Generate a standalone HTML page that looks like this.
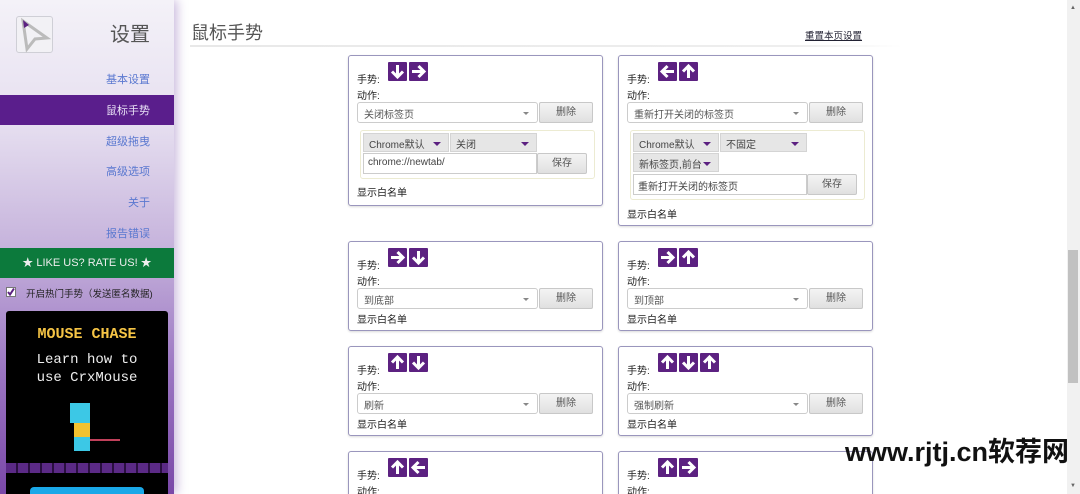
<!DOCTYPE html>
<html><head><meta charset="utf-8"><style>
*{box-sizing:border-box;margin:0;padding:0}
html{width:1080px;height:494px;overflow:hidden}
body{width:1080px;height:494px;overflow:hidden;background:#fff;font-family:"Liberation Sans","Noto Sans CJK SC",sans-serif;font-size:11px;color:#222;position:relative}
.abs{position:absolute}
#side{left:0;top:0;width:174px;height:494px;background:linear-gradient(#f4f2f8 0%,#e6dff0 25%,#c6b3dc 50%,#9b76c2 75%,#7a48a8 100%);box-shadow:3px 0 10px rgba(120,80,170,.4)}
.nav{position:absolute;right:24px;font-size:11px;color:#5a78d0}
.card{position:absolute;border:1px solid #9a96bd;border-radius:3px;background:#fff;box-shadow:0 1px 2px rgba(0,0,0,.15)}
.g{position:absolute;left:8px;font-size:10px}
.ico{position:absolute;top:6px;left:39px;display:flex;gap:2px}
.ico span{width:19px;height:19px;background:#5c2181;display:block;border-radius:1px}
.ico svg{display:block}
.sel{position:absolute;left:8px;width:181px;height:21px;border:1px solid #ccc;border-radius:3px;background:#fff;font-size:10px;color:#555;padding:3px 6px}
.sel:after{content:"";position:absolute;right:8px;top:9px;border:3px solid transparent;border-top:3px solid #888}
.btn{position:absolute;left:190px;width:54px;height:21px;border:1px solid #c8c8c8;border-radius:2px;background:linear-gradient(#f4f4f4,#e0e0e0);font-size:10px;color:#555;text-align:center;line-height:19px}
.dd{position:absolute;height:19px;background:#e6e6e6;border:1px solid #d4d4d4;font-size:10px;color:#444;padding:2px 5px}
.dd:after{content:"";position:absolute;right:7px;top:8px;border:4px solid transparent;border-top:4px solid #5c2181}
.inp{position:absolute;height:21px;border:1px solid #ccc;background:#fff;font-size:10px;color:#444;padding:3px 4px}
</style></head><body>
<div id="side" class="abs">
 <div class="abs" style="left:16px;top:16px;width:37px;height:37px;border:1px solid #cfcfd6;border-radius:3px;background:#f2f1f5">
  <svg width="37" height="37" viewBox="0 0 37 37"><path d="M6 4 L30 21 L18 22 L10 32 Z" fill="none" stroke="#bbb" stroke-width="3"/><path d="M6 3 L12 8 L7 11 Z" fill="#5c2181"/></svg>
 </div>
 <div class="abs" style="right:24px;top:18px;font-size:20px;color:#555">设置</div>
 <div class="nav" style="top:71px">基本设置</div>
 <div class="abs" style="left:0;top:95px;width:174px;height:30px;background:#5a1e8c"></div>
 <div class="nav" style="top:102px;color:#e8e0f5">鼠标手势</div>
 <div class="nav" style="top:133px">超级拖曳</div>
 <div class="nav" style="top:163px">高级选项</div>
 <div class="nav" style="top:194px">关于</div>
 <div class="nav" style="top:225px">报告错误</div>
 <div class="abs" style="left:0;top:248px;width:174px;height:30px;background:#0c7a3c;color:#eee;font-size:11px;text-align:center;line-height:30px">★ LIKE US? RATE US! ★</div>
 <svg class="abs" style="left:6px;top:287px" width="10" height="10"><rect x=".5" y=".5" width="9" height="9" fill="#fff" stroke="#777"/><path d="M2 5l2 2.5 4-6" stroke="#5c2181" stroke-width="2" fill="none"/></svg>
 <div class="abs" style="left:26px;top:286px;font-size:9.5px;color:#222">开启热门手势（发送匿名数据)</div>
 <div class="abs" style="left:6px;top:311px;width:162px;height:190px;background:#000;border-radius:3px">
  <div class="abs" style="left:0;width:162px;top:15px;text-align:center;color:#f5c445;font-weight:bold;font-size:15px;font-family:'Liberation Mono',monospace">MOUSE CHASE</div>
  <div class="abs" style="left:0;width:162px;top:40px;text-align:center;color:#eee;font-size:14px;font-family:'Liberation Mono',monospace;line-height:18px">Learn how to<br>use CrxMouse</div>
  <div class="abs" style="left:64px;top:92px;width:20px;height:20px;background:#3cc8e6"></div>
  <div class="abs" style="left:68px;top:112px;width:16px;height:14px;background:#f2c230"></div>
  <div class="abs" style="left:68px;top:126px;width:16px;height:14px;background:#3cc8e6"></div>
  <div class="abs" style="left:84px;top:128px;width:30px;height:2px;background:#c0405a"></div>
  <div class="abs" style="left:0;top:152px;width:162px;height:10px;background:repeating-linear-gradient(90deg,#5b2a86 0 10px,#2a0f40 10px 12px)"></div>
  <div class="abs" style="left:24px;top:176px;width:114px;height:14px;background:#1aa8e8;border-radius:4px"></div>
 </div>
</div>
<div class="abs" style="left:191px;top:19px;font-size:18px;color:#555">鼠标手势</div>
<div class="abs" style="left:805px;top:28px;font-size:9.5px;color:#223;text-decoration:underline">重置本页设置</div>
<div class="abs" style="left:190px;top:45px;width:712px;height:2px;background:linear-gradient(90deg,#e8e8e8,#eee 85%,#fff)"></div>

<div class="card" style="left:348px;top:55px;width:255px;height:151px">
 <div class="g" style="top:15px">手势:</div>
 <div class="ico"><span><svg width="19" height="19"><path d="M9.5 3v12M4 9.5l5.5 5.5 5.5-5.5" stroke="#fff" stroke-width="3" fill="none"/></svg></span><span><svg width="19" height="19"><path d="M3 9.5h12M9.5 4l5.5 5.5-5.5 5.5" stroke="#fff" stroke-width="3" fill="none"/></svg></span></div>
 <div class="g" style="top:31px">动作:</div>
 <div class="sel" style="top:46px">关闭标签页</div><div class="btn" style="top:46px">删除</div>
 <div class="abs" style="left:11px;top:74px;width:235px;height:49px;border:1px solid #ecebd2;border-radius:3px"></div>
 <div class="dd" style="left:14px;top:77px;width:86px">Chrome默认</div>
 <div class="dd" style="left:101px;top:77px;width:87px">关闭</div>
 <div class="inp" style="left:14px;top:97px;width:174px">chrome://newtab/</div>
 <div class="btn" style="left:188px;top:97px;width:50px">保存</div>
 <div class="g" style="top:128px">显示白名单</div>
</div>
<div class="card" style="left:618px;top:55px;width:255px;height:171px">
 <div class="g" style="top:15px">手势:</div>
 <div class="ico"><span><svg width="19" height="19"><path d="M16 9.5H4M9.5 4L4 9.5l5.5 5.5" stroke="#fff" stroke-width="3" fill="none"/></svg></span><span><svg width="19" height="19"><path d="M9.5 16V4M4 9.5l5.5-5.5 5.5 5.5" stroke="#fff" stroke-width="3" fill="none"/></svg></span></div>
 <div class="g" style="top:31px">动作:</div>
 <div class="sel" style="top:46px">重新打开关闭的标签页</div><div class="btn" style="top:46px">删除</div>
 <div class="abs" style="left:11px;top:74px;width:235px;height:70px;border:1px solid #ecebd2;border-radius:3px"></div>
 <div class="dd" style="left:14px;top:77px;width:86px">Chrome默认</div>
 <div class="dd" style="left:101px;top:77px;width:87px">不固定</div>
 <div class="dd" style="left:14px;top:97px;width:86px">新标签页,前台</div>
 <div class="inp" style="left:14px;top:118px;width:174px">重新打开关闭的标签页</div>
 <div class="btn" style="left:188px;top:118px;width:50px">保存</div>
 <div class="g" style="top:150px">显示白名单</div>
</div>
<div class="card" style="left:348px;top:241px;width:255px;height:90px">
 <div class="g" style="top:15px">手势:</div>
 <div class="ico"><span><svg width="19" height="19"><path d="M3 9.5h12M9.5 4l5.5 5.5-5.5 5.5" stroke="#fff" stroke-width="3" fill="none"/></svg></span><span><svg width="19" height="19"><path d="M9.5 3v12M4 9.5l5.5 5.5 5.5-5.5" stroke="#fff" stroke-width="3" fill="none"/></svg></span></div>
 <div class="g" style="top:31px">动作:</div>
 <div class="sel" style="top:46px">到底部</div><div class="btn" style="top:46px">删除</div>
 <div class="g" style="top:69px">显示白名单</div>
</div>
<div class="card" style="left:618px;top:241px;width:255px;height:90px">
 <div class="g" style="top:15px">手势:</div>
 <div class="ico"><span><svg width="19" height="19"><path d="M3 9.5h12M9.5 4l5.5 5.5-5.5 5.5" stroke="#fff" stroke-width="3" fill="none"/></svg></span><span><svg width="19" height="19"><path d="M9.5 16V4M4 9.5l5.5-5.5 5.5 5.5" stroke="#fff" stroke-width="3" fill="none"/></svg></span></div>
 <div class="g" style="top:31px">动作:</div>
 <div class="sel" style="top:46px">到顶部</div><div class="btn" style="top:46px">删除</div>
 <div class="g" style="top:69px">显示白名单</div>
</div>
<div class="card" style="left:348px;top:346px;width:255px;height:90px">
 <div class="g" style="top:15px">手势:</div>
 <div class="ico"><span><svg width="19" height="19"><path d="M9.5 16V4M4 9.5l5.5-5.5 5.5 5.5" stroke="#fff" stroke-width="3" fill="none"/></svg></span><span><svg width="19" height="19"><path d="M9.5 3v12M4 9.5l5.5 5.5 5.5-5.5" stroke="#fff" stroke-width="3" fill="none"/></svg></span></div>
 <div class="g" style="top:31px">动作:</div>
 <div class="sel" style="top:46px">刷新</div><div class="btn" style="top:46px">删除</div>
 <div class="g" style="top:69px">显示白名单</div>
</div>
<div class="card" style="left:618px;top:346px;width:255px;height:90px">
 <div class="g" style="top:15px">手势:</div>
 <div class="ico"><span><svg width="19" height="19"><path d="M9.5 16V4M4 9.5l5.5-5.5 5.5 5.5" stroke="#fff" stroke-width="3" fill="none"/></svg></span><span><svg width="19" height="19"><path d="M9.5 3v12M4 9.5l5.5 5.5 5.5-5.5" stroke="#fff" stroke-width="3" fill="none"/></svg></span><span><svg width="19" height="19"><path d="M9.5 16V4M4 9.5l5.5-5.5 5.5 5.5" stroke="#fff" stroke-width="3" fill="none"/></svg></span></div>
 <div class="g" style="top:31px">动作:</div>
 <div class="sel" style="top:46px">强制刷新</div><div class="btn" style="top:46px">删除</div>
 <div class="g" style="top:69px">显示白名单</div>
</div>
<div class="card" style="left:348px;top:451px;width:255px;height:60px">
 <div class="g" style="top:15px">手势:</div>
 <div class="ico"><span><svg width="19" height="19"><path d="M9.5 16V4M4 9.5l5.5-5.5 5.5 5.5" stroke="#fff" stroke-width="3" fill="none"/></svg></span><span><svg width="19" height="19"><path d="M16 9.5H4M9.5 4L4 9.5l5.5 5.5" stroke="#fff" stroke-width="3" fill="none"/></svg></span></div>
 <div class="g" style="top:31px">动作:</div>
</div>
<div class="card" style="left:618px;top:451px;width:255px;height:60px">
 <div class="g" style="top:15px">手势:</div>
 <div class="ico"><span><svg width="19" height="19"><path d="M9.5 16V4M4 9.5l5.5-5.5 5.5 5.5" stroke="#fff" stroke-width="3" fill="none"/></svg></span><span><svg width="19" height="19"><path d="M3 9.5h12M9.5 4l5.5 5.5-5.5 5.5" stroke="#fff" stroke-width="3" fill="none"/></svg></span></div>
 <div class="g" style="top:31px">动作:</div>
</div>

<div class="abs" style="left:845px;top:430px;font-size:27px;font-weight:bold;color:#111;white-space:nowrap">www.rjtj.cn软荐网</div>
<div class="abs" style="left:1067px;top:0;width:13px;height:494px;background:#f1f1f1"></div>
<div class="abs" style="left:1068px;top:250px;width:10px;height:133px;background:#c1c1c1"></div>
<div class="abs" style="left:1070px;top:5px;font-size:6px;color:#666">▲</div>
<div class="abs" style="left:1070px;top:483px;font-size:6px;color:#666">▼</div>
</body></html>
